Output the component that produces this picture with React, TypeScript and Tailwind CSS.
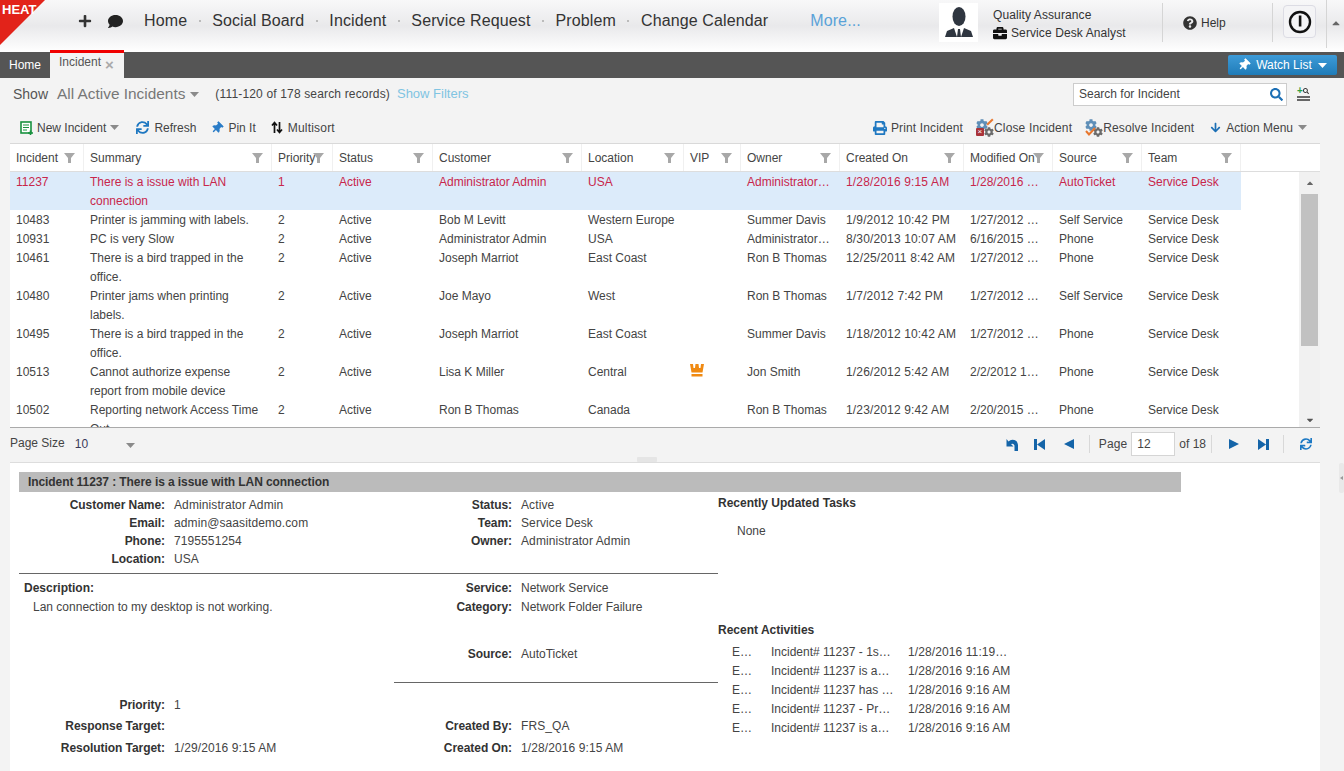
import React from "react";
import { FaPlus, FaComment, FaThumbtack, FaSync, FaPrint, FaBriefcase, FaQuestionCircle, FaSearch, FaArrowDown, FaCog, FaCaretDown, FaCaretUp } from "react-icons/fa";

const Caret = ({ c = "text-[#8a8a8a]" }: { c?: string }) => (
  <svg width="9" height="5" viewBox="0 0 9 5" className={`inline-block ${c}`}><polygon points="0,0 9,0 4.5,5" fill="currentColor" /></svg>
);
const Funnel = () => (
  <svg width="11" height="10" viewBox="0 0 11 10" className="shrink-0"><polygon points="0,0 11,0 7,5 7,10 4,10 4,5" fill="#a8a8a8" /></svg>
);

const nav = ["Home", "Social Board", "Incident", "Service Request", "Problem", "Change Calendar"];

const cols = [
  { n: "Incident", w: 74, f: 54 },
  { n: "Summary", w: 188, f: 168 },
  { n: "Priority", w: 61, f: 41 },
  { n: "Status", w: 100, f: 80 },
  { n: "Customer", w: 149, f: 129 },
  { n: "Location", w: 102, f: 82 },
  { n: "VIP", w: 57, f: 37 },
  { n: "Owner", w: 99, f: 79 },
  { n: "Created On", w: 124, f: 104 },
  { n: "Modified On", w: 89, f: 69 },
  { n: "Source", w: 89, f: 69 },
  { n: "Team", w: 99, f: 79 },
];

type Row = string[];
const rows: Row[] = [
  ["11237", "There is a issue with LAN connection", "1", "Active", "Administrator Admin", "USA", "", "Administrator…", "1/28/2016 9:15 AM", "1/28/2016 …", "AutoTicket", "Service Desk"],
  ["10483", "Printer is jamming with labels.", "2", "Active", "Bob M Levitt", "Western Europe", "", "Summer Davis", "1/9/2012 10:42 PM", "1/27/2012 …", "Self Service", "Service Desk"],
  ["10931", "PC is very Slow", "2", "Active", "Administrator Admin", "USA", "", "Administrator…", "8/30/2013 10:07 AM", "6/16/2015 …", "Phone", "Service Desk"],
  ["10461", "There is a bird trapped in the office.", "2", "Active", "Joseph Marriot", "East Coast", "", "Ron B Thomas", "12/25/2011 8:42 AM", "1/27/2012 …", "Phone", "Service Desk"],
  ["10480", "Printer jams when printing labels.", "2", "Active", "Joe Mayo", "West", "", "Ron B Thomas", "1/7/2012 7:42 PM", "1/27/2012 …", "Self Service", "Service Desk"],
  ["10495", "There is a bird trapped in the office.", "2", "Active", "Joseph Marriot", "East Coast", "", "Summer Davis", "1/18/2012 10:42 AM", "1/27/2012 …", "Phone", "Service Desk"],
  ["10513", "Cannot authorize expense report from mobile device", "2", "Active", "Lisa K Miller", "Central", "vip", "Jon Smith", "1/26/2012 5:42 AM", "2/2/2012 1…", "Phone", "Service Desk"],
  ["10502", "Reporting network Access Time Out", "2", "Active", "Ron B Thomas", "Canada", "", "Ron B Thomas", "1/23/2012 9:42 AM", "2/20/2015 …", "Phone", "Service Desk"],
];

const Crown = () => (
  <svg width="14" height="13" viewBox="0 0 14 13" className="mt-[1px]">
    <polygon points="0,0 3,0 3.5,4 5,4 5.5,0 8.5,0 9,4 10.5,4 11,0 14,0 12.5,8.5 1.5,8.5" fill="#f08a12" />
    <rect x="1.5" y="10" width="11" height="2.5" fill="#f08a12" />
  </svg>
);

const GearIcon = ({ kind }: { kind: "close" | "resolve" }) => (
  <span className="relative inline-block w-[18px] h-[18px] shrink-0">
    <FaCog className="absolute left-0 top-0 text-[#5f8fb8]" size={12} />
    <FaCog className="absolute right-0 bottom-0 text-[#6b6b6b]" size={10} />
    {kind === "close" ? (
      <span className="absolute left-0 bottom-[1px] w-[8px] h-[8px] bg-[#a9333a] rounded-[1px] flex items-center justify-center text-white text-[8px] leading-none">×</span>
    ) : (
      <svg className="absolute left-0 bottom-[1px]" width="11" height="9" viewBox="0 0 11 9"><path d="M1 4 L4 7.5 L10 1" fill="none" stroke="#e8772e" strokeWidth="2" /></svg>
    )}
    {kind === "close" && <span className="absolute right-0 top-[2px] w-[8px] h-[2px] bg-[#e8772e] rotate-[-45deg]" />}
  </span>
);

function Field({ label, value, w, h = 18, plain = false }: { label: string; value: string; w: number; h?: number; plain?: boolean }) {
  return (
    <div className="flex items-center" style={{ height: h }}>
      <div className="font-bold text-right text-[#333] shrink-0 tracking-[-0.05px]" style={{ width: w }}>{label}</div>
      <div className={`ml-[9px] text-[#444] whitespace-nowrap ${plain ? "" : "tracking-[0.1px]"}`}>{value}</div>
    </div>
  );
}

const Sep = () => <span className="block w-px h-[18px] bg-[#d8d8d8]" />;

export default function App() {
  return (
    <div className="w-[1344px] h-[771px] overflow-hidden flex flex-col bg-[#f3f3f3] font-['Liberation_Sans',Arial,sans-serif] text-[12px] text-[#444]">
      {/* top header */}
      <header className="relative h-[52px] shrink-0 flex items-center pb-[10px] bg-gradient-to-b from-[#f8f8f9] via-[#e9e9eb] to-white">
        <div className="absolute left-0 top-0 w-[45px] h-[45px] overflow-hidden">
          <svg width="45" height="45" viewBox="0 0 45 45" className="absolute left-0 top-0"><polygon points="0,0 45,0 0,45" fill="#e2231a" /></svg>
          <span className="absolute left-[2px] top-[2px] text-[13px] leading-[15px] font-bold text-[#fff]">HEAT</span>
        </div>
        <FaPlus className="ml-[78px] text-[#333]" size={14} />
        <FaComment className="ml-[16px] text-[#222]" size={15} />
        <nav className="flex items-center ml-[21px] text-[16px] tracking-[0.12px] text-[#333]">
          {nav.map((n, i) => (
            <React.Fragment key={n}>
              {i > 0 && <span className="mx-[11.5px] w-[2px] h-[2px] bg-[#bbb]" />}
              <span className="whitespace-nowrap">{n}</span>
            </React.Fragment>
          ))}
          <span className="ml-[42px] text-[#5aa2d8]">More...</span>
        </nav>
        <div className="absolute left-[939px] top-[3px] flex items-center h-[39px]">
          <div className="w-[39px] h-[39px] bg-white flex items-center justify-center">
            <svg width="30" height="32" viewBox="0 0 30 32"><ellipse cx="15" cy="9.5" rx="6.5" ry="9.5" fill="#2f3640" /><path d="M1 30 L3 24 L10 21 L13 30 Z M29 30 L27 24 L20 21 L17 30 Z M14 22 h2 l1 8 h-4 Z" fill="#2f3640" /></svg>
          </div>
          <div className="ml-[15px] mt-[3px] w-[169px] text-[#333] leading-[18px] tracking-[0.1px]">
            <div>Quality Assurance</div>
            <div className="flex items-center gap-[4px]"><FaBriefcase size={14} className="text-[#111]" /><span>Service Desk Analyst</span></div>
          </div>
          <div className="w-px h-[39px] bg-[#d5d5d5]" />
          <div className="w-[109px] flex items-center pl-[20px] gap-[4px] text-[#333]"><FaQuestionCircle size={14} className="text-[#333]" />Help</div>
          <div className="w-px h-[39px] bg-[#d5d5d5]" />
          <div className="ml-[10px] -mt-[2px] w-[33px] h-[33px] rounded-[4px] border border-[#dcdce4] bg-[#f4f4f6] flex items-center justify-center">
            <svg width="24" height="24" viewBox="0 0 24 24"><circle cx="12" cy="12" r="10" fill="none" stroke="#111" strokeWidth="2.4" /><rect x="10.8" y="5.5" width="2.6" height="11" fill="#111" /></svg>
          </div>
          <div className="ml-[10px] self-start -mt-[3px] w-px h-[48px] bg-[#d5d5d5]" />
          <div className="w-[17px] flex justify-center"><FaCaretUp size={12} className="text-[#666]" /></div>
        </div>
      </header>

      {/* tabs */}
      <div className="h-[26px] shrink-0 bg-[#555] flex items-stretch relative">
        <div className="w-[50px] flex items-center justify-center text-white">Home</div>
        <div className="w-[74px] -mt-[2px] bg-[#f3f3f3] border-t-[3px] border-[#f00000] flex items-center pl-[9px] gap-[4px] text-[#555]">
          <span className="mt-[-7px]">Incident</span><span className="mt-[-2px] text-[#aaa] text-[15px] font-bold leading-none">×</span>
        </div>
        <button className="ml-auto mr-[7px] mt-[3px] w-[109px] h-[20px] rounded-[2px] bg-gradient-to-b from-[#3d9bd8] to-[#1f7cb8] text-white flex items-center justify-center gap-[6px]">
          <FaThumbtack size={12} className="rotate-45" /> <span>Watch List</span> <Caret c="text-white" />
        </button>
      </div>

      {/* filter row */}
      <div className="h-[32px] shrink-0 flex items-center pl-[13px] pr-[34px]">
        <span className="text-[14px] text-[#555]">Show</span>
        <span className="ml-[9px] text-[15.4px] text-[#777]">All Active Incidents</span>
        <span className="ml-[5px] flex"><Caret /></span>
        <span className="ml-[16px] text-[#444] tracking-[0.16px]">(111-120 of 178 search records)</span>
        <span className="ml-[7px] text-[13px] text-[#80c4e2]">Show Filters</span>
        <div className="ml-auto w-[214px] h-[23px] bg-white border border-[#ccc] flex items-center pl-[5px] pr-[3px] text-[#444]">
          Search for Incident
          <FaSearch size={13} className="ml-auto text-[#1b6fb5]" />
        </div>
        <div className="ml-[9px] w-[14px] flex flex-col items-center">
          <span className="flex items-center text-[10px] leading-[8px] font-bold"><span className="text-[#2f9e44]">+</span><FaSearch size={6} className="text-[#333]" /></span>
          <span className="w-[13px] h-[2px] bg-[#666] mt-[1px]" />
          <span className="w-[13px] h-[2px] bg-[#666] mt-[1px]" />
        </div>
      </div>

      {/* action toolbar */}
      <div className="h-[33px] shrink-0 flex items-center pt-[2px] pl-[20px] pr-[37px] text-[#444]">
        <span className="flex items-center gap-[4px]">
          <svg width="13" height="14" viewBox="0 0 13 14"><rect x="1" y="1" width="10" height="11" fill="#fff" stroke="#18913f" strokeWidth="1.6" /><path d="M3 4h6M3 6.5h6M3 9h4" stroke="#18913f" /><path d="M8 12h5M10.5 9.5v4.5" stroke="#18913f" strokeWidth="1.6" /></svg>
          New Incident
        </span>
        <span className="ml-[4px] flex"><Caret /></span>
        <span className="ml-[17px] flex items-center gap-[5px]"><FaSync size={13} className="text-[#1f78c1]" />Refresh</span>
        <span className="ml-[15px] flex items-center gap-[5px]"><FaThumbtack size={12} className="rotate-45 text-[#2a7cc7]" />Pin It</span>
        <span className="ml-[15px] flex items-center gap-[5px] tracking-[0.2px]">
          <svg width="12" height="13" viewBox="0 0 12 13"><path d="M3.5 12V2M1 4.5 3.5 1.5 6 4.5M8.5 1v10M6 8.5l2.5 3 2.5-3" fill="none" stroke="#111" strokeWidth="1.7" /></svg>
          Multisort
        </span>
        <span className="ml-auto flex items-center gap-[4px] tracking-[0.15px]"><FaPrint size={14} className="text-[#1f78c1]" />Print Incident</span>
        <span className="ml-[13px] flex items-center tracking-[0.15px]"><GearIcon kind="close" />Close Incident</span>
        <span className="ml-[13px] flex items-center tracking-[0.15px]"><GearIcon kind="resolve" />Resolve Incident</span>
        <span className="ml-[16px] flex items-center gap-[5px]"><FaArrowDown size={11} className="text-[#1b6fb5]" />Action Menu</span>
        <span className="ml-[5px] flex"><Caret /></span>
      </div>

      {/* grid */}
      <section className="mx-[10px] w-[1310px] h-[285px] shrink-0 border-t border-[#d9d9d9] border-b border-b-[#aaa] bg-white flex flex-col overflow-hidden">
        <div className="h-[28px] shrink-0 flex border-b border-[#ddd] text-[#444]">
          {cols.map((c) => (
            <div key={c.n} className="h-full flex items-center pl-[6px] border-r border-[#f0f0f0] relative" style={{ width: c.w }}>
              <span className="whitespace-nowrap">{c.n}</span>
              <span className="absolute top-[9px]" style={{ left: c.f }}><Funnel /></span>
            </div>
          ))}
        </div>
        <div className="flex flex-1 min-h-0">
          <div className="w-[1231px] shrink-0 overflow-hidden">
            {rows.map((r, i) => (
              <div key={r[0]} className={`flex leading-[19px] ${i === 0 ? "bg-[#dcebfa] text-[#c8264b]" : "text-[#444]"}`}>
                {r.map((v, j) => (
                  <div key={j} className="pl-[6px] pr-[2px] shrink-0 translate-y-[1px]" style={{ width: cols[j].w }}>
                    {v === "vip" ? <Crown /> : j === 1 ? <div className="pr-[9px]">{v}</div> : <div className={`whitespace-nowrap ${j === 8 ? "tracking-[0.15px]" : ""}`}>{v}</div>}
                  </div>
                ))}
              </div>
            ))}
          </div>
          <div className="ml-[58px] w-[21px] bg-[#f1f1f1] flex flex-col items-center">
            <div className="h-[22px] flex items-center"><FaCaretUp size={10} className="text-[#666]" /></div>
            <div className="w-[17px] h-[152px] bg-[#c1c1c1]" />
            <div className="mt-auto h-[15px] flex items-center"><FaCaretDown size={10} className="text-[#555]" /></div>
          </div>
        </div>
      </section>

      {/* pager */}
      <div className="mx-[10px] w-[1310px] h-[34px] shrink-0 flex items-center text-[#444] pb-[2px] pr-[8px]">
        <span className="mt-[-3px]">Page Size</span>
        <span className="ml-[10px] text-[#3a3a5a]">10</span>
        <span className="ml-[38px] mt-[2px] flex"><Caret /></span>
        <div className="ml-auto flex items-center">
          <svg width="14" height="13" viewBox="0 0 14 13"><path d="M9.5 13 h3.5 v-6 a5.5 5.5 0 0 0 -9.5 -3.5 L1.5 1 v7.5 h7 L6 6 a2.6 2.6 0 0 1 3.5 1.5 z" fill="#1464a8" /></svg>
          <svg className="ml-[15px]" width="11" height="11" viewBox="0 0 11 11"><path d="M0 0h3v11H0zM11 0v11L3 5.5z" fill="#1464a8" /></svg>
          <svg className="ml-[19px]" width="10" height="10" viewBox="0 0 10 10"><path d="M10 0v10L0 5z" fill="#1464a8" /></svg>
          <span className="ml-[15px]"><Sep /></span>
          <span className="ml-[9px] tracking-[0.1px]">Page</span>
          <span className="ml-[4px] w-[44px] h-[24px] bg-white border border-[#d5d5d5] flex items-center pl-[5px]">12</span>
          <span className="ml-[4px]">of 18</span>
          <span className="ml-[5px]"><Sep /></span>
          <svg className="ml-[17px]" width="10" height="10" viewBox="0 0 10 10"><path d="M0 0v10l10-5z" fill="#1464a8" /></svg>
          <svg className="ml-[19px]" width="11" height="11" viewBox="0 0 11 11"><path d="M8 0h3v11H8zM0 0v11l8-5.5z" fill="#1464a8" /></svg>
          <span className="ml-[14px]"><Sep /></span>
          <FaSync size={12} className="ml-[16px] text-[#1b78c4]" />
        </div>
      </div>

      {/* detail */}
      <section className="relative mx-[10px] w-[1310px] flex-1 border-t border-[#ddd] bg-white pl-[9px] pt-[9px]">
        <span className="absolute left-[627px] top-[-6px] w-[20px] h-[5px] bg-[#e5e5e5] rounded-[1px]" />
        <div className="w-[1162px] h-[20px] bg-[#bbbbbb] flex items-center pl-[9px] font-bold text-[#333] tracking-[-0.08px]">Incident 11237 : There is a issue with LAN connection</div>
        <div className="flex">
          <div className="w-[699px] shrink-0">
            <div className="pt-[4px] h-[82px] border-b border-[#666] grid grid-cols-[350px_349px] content-start">
              <div>
                <Field w={146} label="Customer Name:" value="Administrator Admin" />
                <Field w={146} label="Email:" value="admin@saasitdemo.com" />
                <Field w={146} label="Phone:" value="7195551254" />
                <Field w={146} label="Location:" value="USA" />
              </div>
              <div>
                <Field w={143} label="Status:" value="Active" />
                <Field w={143} label="Team:" value="Service Desk" />
                <Field w={143} label="Owner:" value="Administrator Admin" />
              </div>
            </div>
            <div className="grid grid-cols-[375px_324px] h-[109px]">
              <div className="pl-[5px] pt-[5px]">
                <div className="font-bold text-[#333] leading-[19px]">Description:</div>
                <div className="pl-[9px] leading-[19px] text-[#444]">Lan connection to my desktop is not working.</div>
              </div>
              <div className="flex flex-col border-b border-[#666] pt-[4px]">
                <Field w={118} label="Service:" value="Network Service" h={19} plain />
                <Field w={118} label="Category:" value="Network Folder Failure" h={20} plain />
                <div className="mt-[27px]"><Field w={118} label="Source:" value="AutoTicket" h={19} plain /></div>
              </div>
            </div>
            <div className="grid grid-cols-[350px_349px] pt-[12px]">
              <div>
                <Field w={146} label="Priority:" value="1" h={19} />
                <Field w={146} label="Response Target:" value="" h={23} />
                <Field w={146} label="Resolution Target:" value="1/29/2016 9:15 AM" h={21} />
              </div>
              <div className="pt-[19px]">
                <Field w={143} label="Created By:" value="FRS_QA" h={23} />
                <Field w={143} label="Created On:" value="1/28/2016 9:15 AM" h={21} />
              </div>
            </div>
          </div>
          <aside className="flex-1">
            <div className="h-[129px] pt-[2px]">
              <div className="font-bold text-[#333] leading-[18px]">Recently Updated Tasks</div>
              <div className="pl-[19px] pt-[10px] leading-[18px]">None</div>
            </div>
            <div className="font-bold text-[#333] leading-[18px]">Recent Activities</div>
            <div className="pt-[4px]">
              {[
                ["E…", "Incident# 11237 - 1s…", "1/28/2016 11:19…"],
                ["E…", "Incident# 11237 is a…", "1/28/2016 9:16 AM"],
                ["E…", "Incident# 11237 has …", "1/28/2016 9:16 AM"],
                ["E…", "Incident# 11237 - Pr…", "1/28/2016 9:16 AM"],
                ["E…", "Incident# 11237 is a…", "1/28/2016 9:16 AM"],
              ].map((a, i) => (
                <div key={i} className="grid grid-cols-[39px_137px_auto] pl-[14px] leading-[19px] whitespace-nowrap">
                  <span>{a[0]}</span><span>{a[1]}</span><span className="tracking-[0.1px]">{a[2]}</span>
                </div>
              ))}
            </div>
          </aside>
        </div>
        <span className="absolute right-[-24px] top-[0px] w-[5px] h-[30px] bg-[#e9e9e9] rounded-[2px] flex items-center justify-center">
          <svg width="3" height="4" viewBox="0 0 3 4"><polygon points="3,0 3,4 0,2" fill="#999" /></svg>
        </span>
      </section>
    </div>
  );
}
